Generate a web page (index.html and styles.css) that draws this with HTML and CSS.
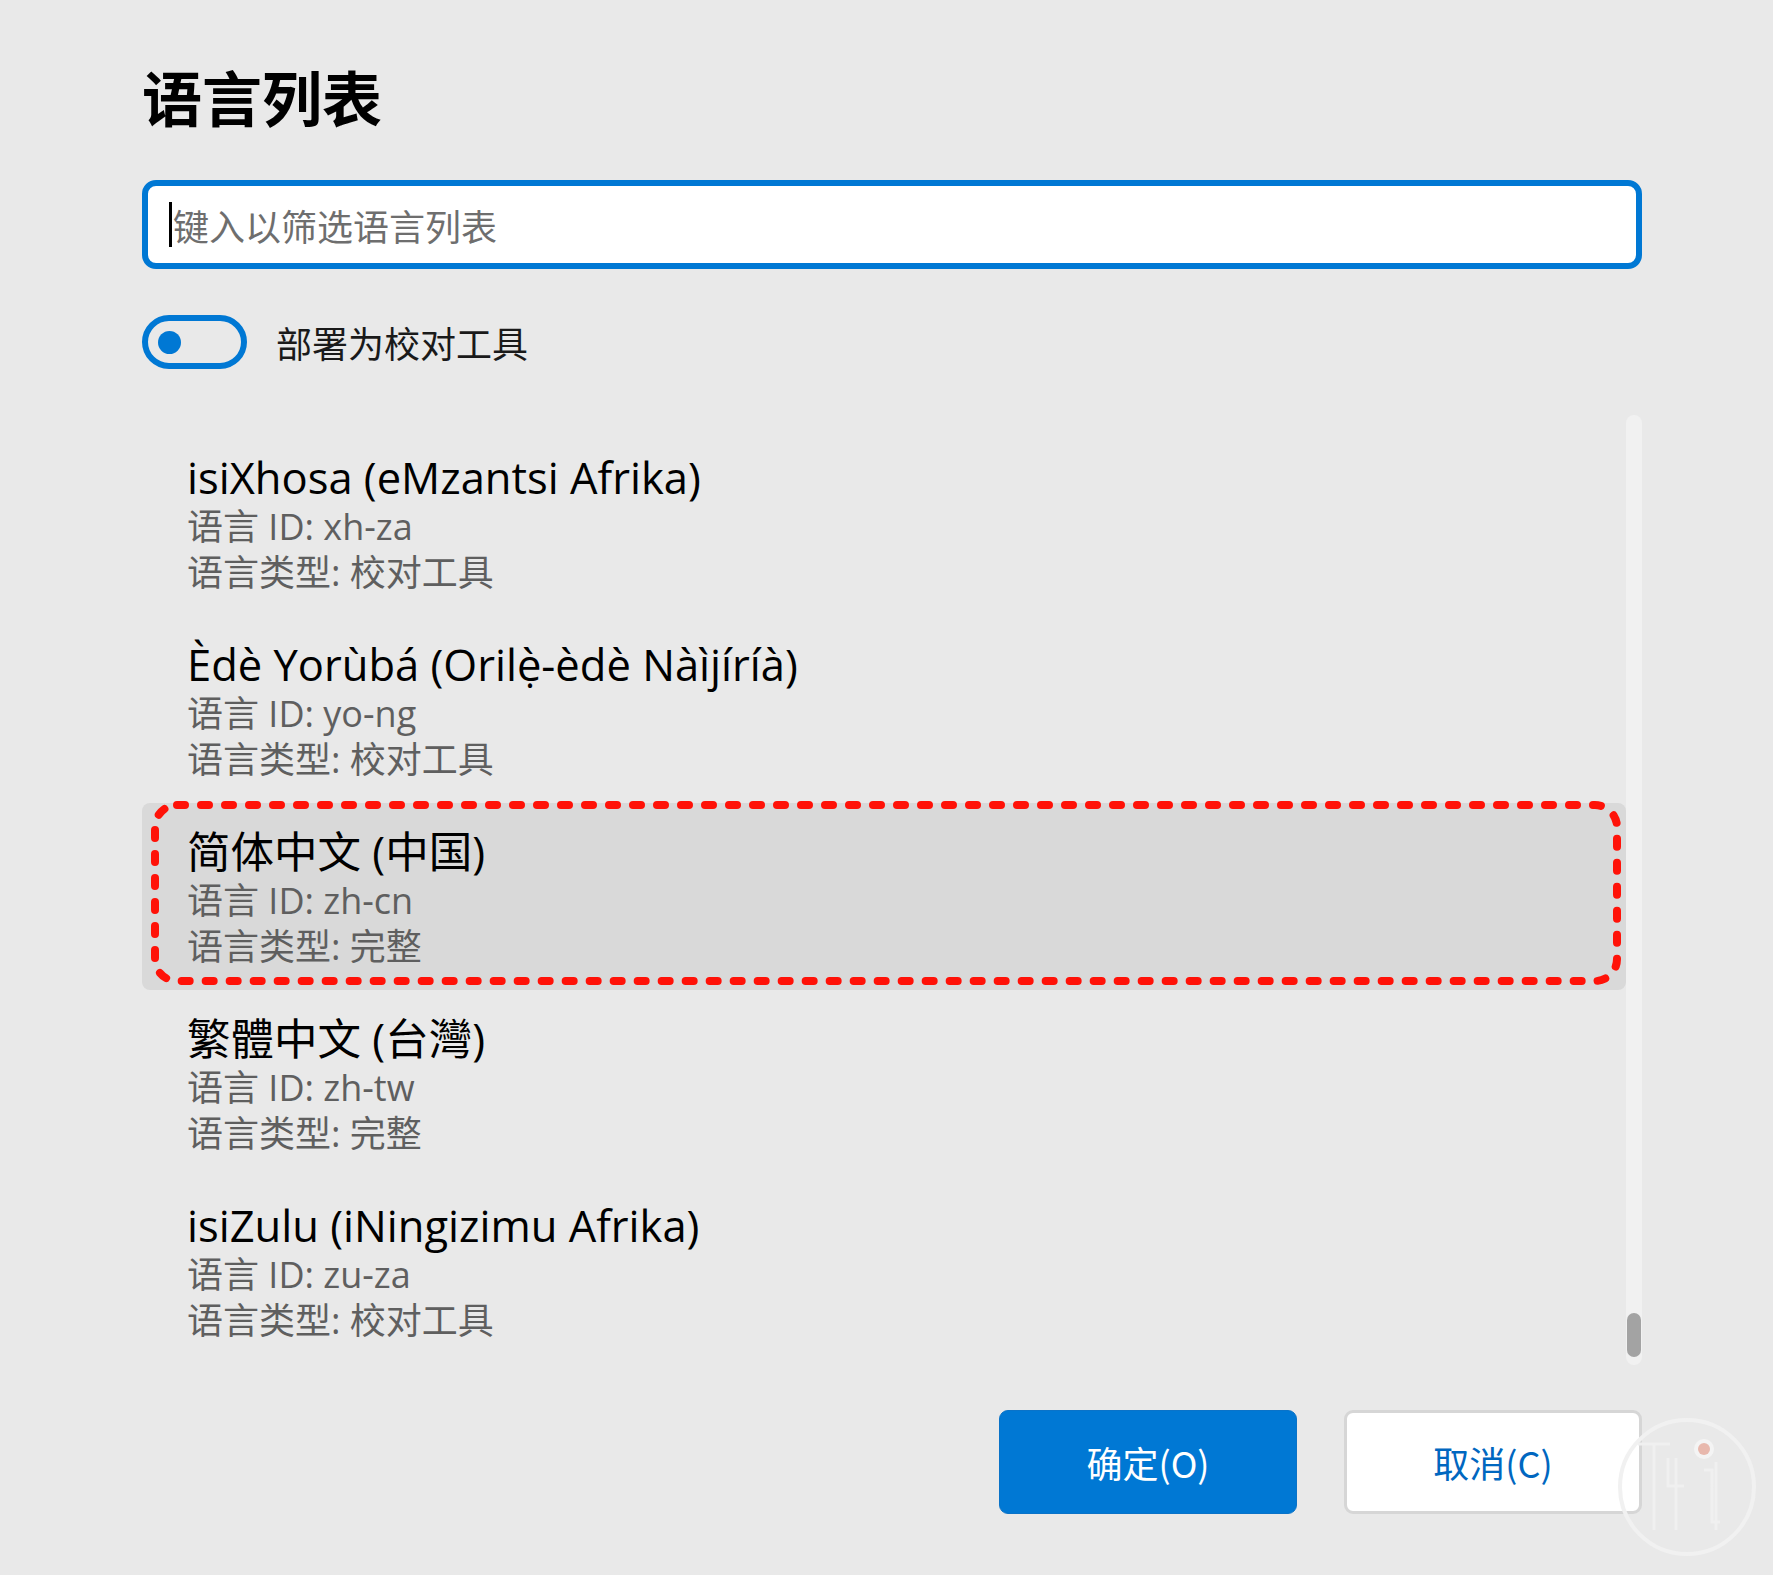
FILE: index.html
```html
<!DOCTYPE html>
<html lang="zh-CN">
<head>
<meta charset="utf-8">
<title>语言列表</title>
<link rel="stylesheet" href="styles.css">
</head>
<body>
<div class="dialog">
  <h1 class="title">语言列表</h1>

  <div class="search">
    <span class="caret"></span>
    <span class="placeholder">键入以筛选语言列表</span>
  </div>

  <div class="toggle-row">
    <div class="toggle"><span class="knob"></span></div>
    <span class="toggle-label">部署为校对工具</span>
  </div>

  <div class="list-wrap">
    <div class="list">
      <div class="item">
        <div class="item-name">isiXhosa (eMzantsi Afrika)</div>
        <div class="item-sub">语言 ID: xh-za</div>
        <div class="item-sub">语言类型: 校对工具</div>
      </div>
      <div class="item">
        <div class="item-name">Èdè Yorùbá (Orilẹ̀-èdè Nàìjíríà)</div>
        <div class="item-sub">语言 ID: yo-ng</div>
        <div class="item-sub">语言类型: 校对工具</div>
      </div>
      <div class="item selected">
        <div class="item-name">简体中文 (中国)</div>
        <div class="item-sub">语言 ID: zh-cn</div>
        <div class="item-sub">语言类型: 完整</div>
        <svg class="annot" width="1474" height="188" viewBox="0 0 1474 188">
          <rect x="13" y="2" width="1462" height="176" rx="22" ry="22" fill="none" stroke="#ff1208" stroke-width="8" stroke-linecap="round" stroke-dasharray="8 16"/>
        </svg>
      </div>
      <div class="item">
        <div class="item-name">繁體中文 (台灣)</div>
        <div class="item-sub">语言 ID: zh-tw</div>
        <div class="item-sub">语言类型: 完整</div>
      </div>
      <div class="item">
        <div class="item-name">isiZulu (iNingizimu Afrika)</div>
        <div class="item-sub">语言 ID: zu-za</div>
        <div class="item-sub">语言类型: 校对工具</div>
      </div>
    </div>
    <div class="scrollbar"><div class="thumb"></div></div>
  </div>

  <div class="buttons">
    <button class="btn primary">确定(O)</button>
    <button class="btn secondary">取消(C)</button>
  </div>
</div>

<svg class="watermark" width="150" height="150" viewBox="0 0 150 150">
  <circle cx="75" cy="75" r="67" fill="none" stroke="#f1f1f1" stroke-width="4"/>
  <path d="M26 32 H58 M42 32 V118 M56 46 V74 H72 M64 46 V118 M92 58 H100 V110 H108 M104 50 V118" fill="none" stroke="#f0f0f0" stroke-width="3"/>
  <circle cx="92" cy="37" r="10" fill="#f4f4f4"/>
  <circle cx="92" cy="37" r="6" fill="#e8b8ad"/>
</svg>
</body>
</html>
```

FILE: styles.css
```css
html, body {
  margin: 0;
  padding: 0;
}

body {
  background: #e9e9e9;
  font-family: "Open Sans", "Noto Sans CJK SC", sans-serif;
  color: #000;
  width: 1773px;
  height: 1575px;
  overflow: hidden;
  position: relative;
}

.dialog {
  width: 1500px;
  margin-left: 142px;
  padding-top: 56px;
  display: flex;
  flex-direction: column;
}

.title {
  margin: 0;
  font-family: "Noto Sans CJK SC", sans-serif;
  font-weight: 700;
  font-size: 60px;
  line-height: 80px;
  height: 80px;
  color: #000;
}

.search {
  margin-top: 44px;
  height: 89px;
  box-sizing: border-box;
  border: 6px solid #0078d4;
  border-radius: 14px;
  background: #fff;
  display: flex;
  align-items: center;
  padding-left: 21px;
}

.caret {
  width: 3px;
  height: 45px;
  background: #000;
  margin-right: 1px;
}

.placeholder {
  font-family: "Noto Sans CJK SC", sans-serif;
  font-size: 36px;
  line-height: 50px;
  color: #6e6e6e;
}

.toggle-row {
  margin-top: 46px;
  height: 54px;
  display: flex;
  align-items: center;
}

.toggle {
  width: 105px;
  height: 54px;
  box-sizing: border-box;
  border: 6px solid #0078d4;
  border-radius: 27px;
  display: flex;
  align-items: center;
  padding-left: 10px;
}

.knob {
  width: 23px;
  height: 23px;
  border-radius: 50%;
  background: #0078d4;
}

.toggle-label {
  margin-left: 29px;
  font-family: "Noto Sans CJK SC", sans-serif;
  font-size: 36px;
  line-height: 54px;
  color: #1a1a1a;
}

.list-wrap {
  margin-top: 46px;
  height: 950px;
  display: flex;
}

.list {
  flex: 1;
  padding-top: 14px;
  display: flex;
  flex-direction: column;
}

.item {
  position: relative;
  height: 187px;
  box-sizing: border-box;
  padding-top: 23px;
  padding-left: 45px;
  border-radius: 8px;
}

.item.selected {
  background: #d9d9d9;
}

.item-name {
  font-size: 43.5px;
  line-height: 52px;
  color: #000;
  white-space: nowrap;
}

.item-sub {
  font-size: 36px;
  line-height: 46px;
  color: #5f5f5f;
  white-space: nowrap;
}

.annot {
  position: absolute;
  left: 0;
  top: 0;
  overflow: visible;
}

.scrollbar {
  width: 16px;
  height: 950px;
  background: #f1f1f1;
  border-radius: 8px;
  display: flex;
  flex-direction: column;
  justify-content: flex-end;
  align-items: center;
  padding-bottom: 8px;
  box-sizing: border-box;
}

.thumb {
  width: 14px;
  height: 44px;
  border-radius: 7px;
  background: #a3a3a3;
}

.buttons {
  margin-top: 45px;
  display: flex;
  justify-content: flex-end;
  gap: 47px;
}

.btn {
  width: 298px;
  height: 104px;
  box-sizing: border-box;
  border-radius: 9px;
  font-family: "Noto Sans CJK SC", sans-serif;
  font-size: 36px;
  line-height: 1;
  padding: 0;
  display: flex;
  align-items: center;
  justify-content: center;
}

.btn.primary {
  background: #0078d4;
  border: 1px solid #0a73c8;
  color: #fff;
}

.btn.secondary {
  background: #fff;
  border: 3px solid #d6d6d6;
  color: #0067c0;
}

.watermark {
  position: absolute;
  left: 1612px;
  top: 1412px;
}
```
